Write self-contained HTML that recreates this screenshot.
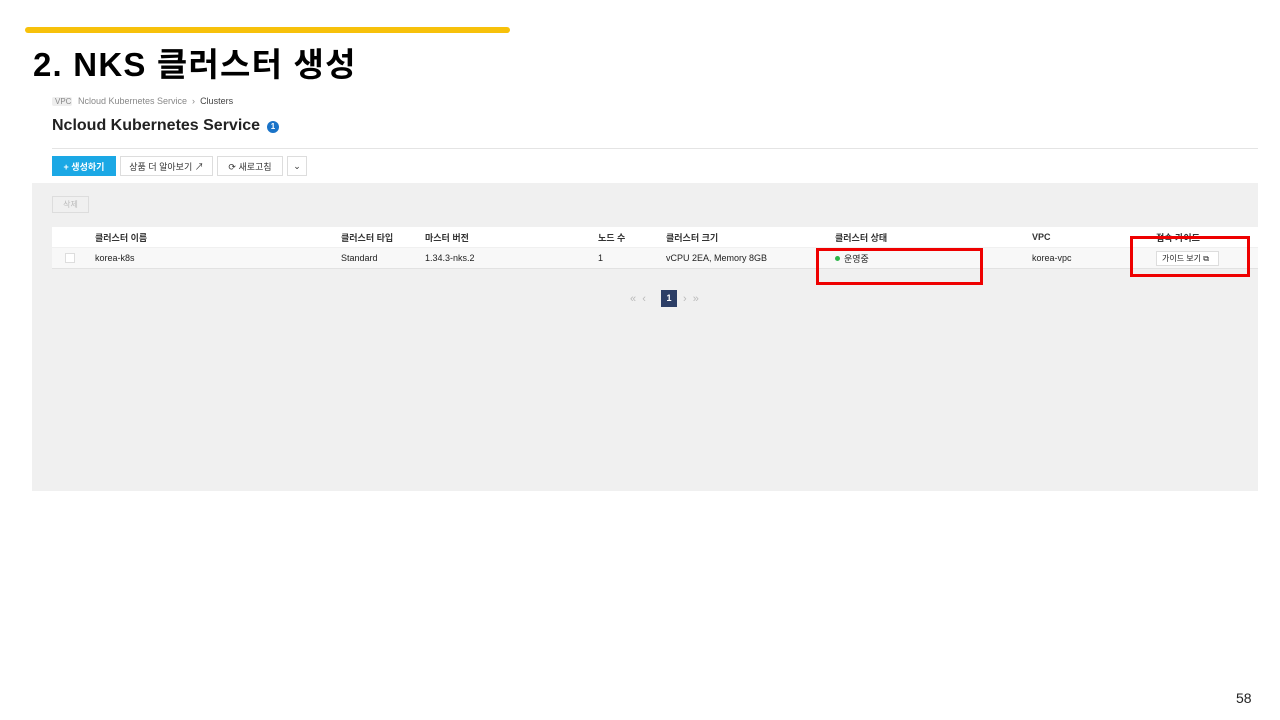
<!DOCTYPE html>
<html><head><meta charset="utf-8"><style>
*{margin:0;padding:0;box-sizing:border-box}
body{width:1280px;height:720px;background:#fff;position:relative;overflow:hidden;font-family:"Liberation Sans","Noto Sans CJK KR",sans-serif;color:#222}
.a{position:absolute}
.t{font-size:9px;white-space:nowrap}
.h{font-size:9px;font-weight:bold;color:#333;white-space:nowrap}
.btn{position:absolute;top:156px;height:20px;border:1px solid #ddd;background:#fff;font-size:9px;display:flex;align-items:center;justify-content:center;color:#333}
</style></head><body>
<div class="a" style="left:25px;top:27px;width:485px;height:6px;background:#f7c10a;border-radius:3px"></div>
<div class="a" style="left:33px;top:45px;font-size:33px;font-weight:bold;color:#000;line-height:40px;letter-spacing:1.2px">2. NKS 클러스터 생성</div>
<div class="a" style="left:52px;top:97px;width:20px;height:9px;background:#eee;border-radius:2px"></div>
<div class="a t" style="left:55px;top:97px;color:#888;font-size:8px">VPC</div>
<div class="a t" style="left:78px;top:96px;color:#888">Ncloud Kubernetes Service &nbsp;›&nbsp; <span style="color:#444">Clusters</span></div>
<div class="a" style="left:52px;top:117px;font-size:16px;font-weight:bold;color:#222">Ncloud Kubernetes Service</div>
<div class="a" style="left:267px;top:121px;width:12px;height:12px;border-radius:50%;background:#1a73c8;color:#fff;font-size:8px;text-align:center;line-height:12px;font-weight:bold">1</div>
<div class="a" style="left:52px;top:148px;width:1206px;height:1px;background:#e4e4e4"></div>
<div class="btn" style="left:52px;width:64px;background:#1ba8e5;border-color:#1ba8e5;color:#fff;font-weight:bold">+ 생성하기</div>
<div class="btn" style="left:120px;width:93px">상품 더 알아보기 ↗</div>
<div class="btn" style="left:217px;width:66px">⟳ 새로고침</div>
<div class="btn" style="left:287px;width:20px">⌄</div>
<div class="a" style="left:32px;top:183px;width:1226px;height:308px;background:#f0f0f0"></div>
<div class="a" style="left:52px;top:196px;width:37px;height:17px;border:1px solid #ddd;font-size:8px;color:#bbb;text-align:center;line-height:15px">삭제</div>
<div class="a" style="left:52px;top:227px;width:1206px;height:20px;background:#fff"></div>
<div class="a" style="left:52px;top:248px;width:1206px;height:21px;background:#f8f8f8;border-bottom:1px solid #e2e2e2"></div>
<div class="a h" style="left:95px;top:231px">클러스터 이름</div>
<div class="a h" style="left:341px;top:231px">클러스터 타입</div>
<div class="a h" style="left:425px;top:231px">마스터 버전</div>
<div class="a h" style="left:598px;top:231px">노드 수</div>
<div class="a h" style="left:666px;top:231px">클러스터 크기</div>
<div class="a h" style="left:835px;top:231px">클러스터 상태</div>
<div class="a h" style="left:1032px;top:232px">VPC</div>
<div class="a h" style="left:1156px;top:231px">접속 가이드</div>
<div class="a" style="left:65px;top:253px;width:10px;height:10px;border:1px solid #ddd;background:#fff"></div>
<div class="a t" style="left:95px;top:253px">korea-k8s</div>
<div class="a t" style="left:341px;top:253px">Standard</div>
<div class="a t" style="left:425px;top:253px">1.34.3-nks.2</div>
<div class="a t" style="left:598px;top:253px">1</div>
<div class="a t" style="left:666px;top:253px">vCPU 2EA, Memory 8GB</div>
<div class="a" style="left:835px;top:256px;width:5px;height:5px;border-radius:50%;background:#2db64a"></div>
<div class="a t" style="left:844px;top:252px">운영중</div>
<div class="a t" style="left:1032px;top:253px">korea-vpc</div>
<div class="a" style="left:1156px;top:251px;width:63px;height:15px;border:1px solid #ddd;background:#fff;font-size:8px;line-height:13px;padding-left:5px">가이드 보기 ⧉</div>
<div class="a" style="left:816px;top:248px;width:167px;height:37px;border:3px solid #e00"></div>
<div class="a" style="left:1130px;top:236px;width:120px;height:41px;border:3px solid #e00"></div>
<div class="a t" style="left:630px;top:293px;color:#bbb;font-size:11px">« &nbsp;‹</div>
<div class="a" style="left:661px;top:290px;width:16px;height:17px;background:#2c3e66;color:#fff;font-size:9px;font-weight:bold;text-align:center;line-height:17px">1</div>
<div class="a t" style="left:683px;top:293px;color:#bbb;font-size:11px">› &nbsp;»</div>
<div class="a" style="left:1236px;top:690px;font-size:14px;color:#222">58</div>
</body></html>
